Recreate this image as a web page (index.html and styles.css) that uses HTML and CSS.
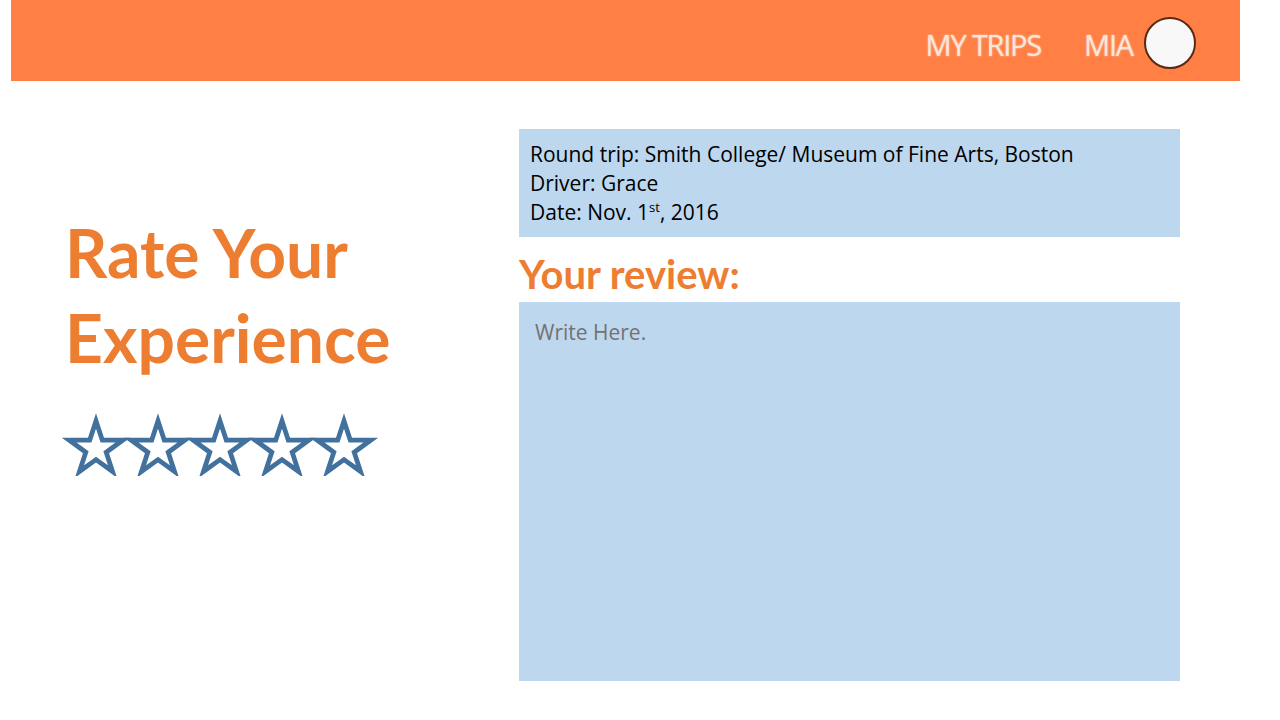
FILE: index.html
```html
<!DOCTYPE html>
<html>
<head>
<meta charset="utf-8">
<link rel="stylesheet" href="styles.css">
</head>
<body>
<header class="topbar">
  <nav class="nav">
    <span class="nav-link">MY TRIPS</span>
    <span class="nav-user">MIA</span>
    <span class="avatar"></span>
  </nav>
</header>
<main class="content">
  <section class="left">
    <h1 class="title">Rate Your<br>Experience</h1>
    <svg class="stars" width="330" height="64" viewBox="0 0 330 64">
      <g fill="#fff" stroke="#41719C" stroke-width="4.8" stroke-linejoin="miter">
        <polygon transform="translate(36 9)" points="0,0 6.3,19.2 26.8,19.2 10.2,31.2 16.5,50.5 0,38.6 -16.5,50.5 -10.2,31.2 -26.8,19.2 -6.3,19.2"/>
        <polygon transform="translate(98 9)" points="0,0 6.3,19.2 26.8,19.2 10.2,31.2 16.5,50.5 0,38.6 -16.5,50.5 -10.2,31.2 -26.8,19.2 -6.3,19.2"/>
        <polygon transform="translate(160 9)" points="0,0 6.3,19.2 26.8,19.2 10.2,31.2 16.5,50.5 0,38.6 -16.5,50.5 -10.2,31.2 -26.8,19.2 -6.3,19.2"/>
        <polygon transform="translate(222 9)" points="0,0 6.3,19.2 26.8,19.2 10.2,31.2 16.5,50.5 0,38.6 -16.5,50.5 -10.2,31.2 -26.8,19.2 -6.3,19.2"/>
        <polygon transform="translate(284 9)" points="0,0 6.3,19.2 26.8,19.2 10.2,31.2 16.5,50.5 0,38.6 -16.5,50.5 -10.2,31.2 -26.8,19.2 -6.3,19.2"/>
      </g>
    </svg>
  </section>
  <section class="right">
    <div class="trip-info">
      <div>Round trip: Smith College/ Museum of Fine Arts, Boston</div>
      <div>Driver: Grace</div>
      <div>Date: Nov. 1<sup>st</sup>, 2016</div>
    </div>
    <h2 class="review-label">Your review:</h2>
    <div class="review-box">Write Here.</div>
  </section>
</main>
</body>
</html>
```
FILE: styles.css
```css
html, body {
  margin: 0;
  padding: 0;
  background: #ffffff;
}
body {
  width: 1280px;
  height: 720px;
  overflow: hidden;
  font-family: "Lato", "Open Sans", sans-serif;
}
.topbar {
  margin-left: 11px;
  width: 1229px;
  height: 81px;
  background: #FF7F45;
}
.nav {
  display: flex;
  justify-content: flex-end;
  align-items: center;
  height: 100%;
  padding-right: 44px;
  padding-top: 6px;
  box-sizing: border-box;
}
.nav-link, .nav-user {
  font-family: "Open Sans", sans-serif;
  font-size: 29px;
  letter-spacing: -1.2px;
  color: #FCE6D8;
  text-shadow: 0 0 2px rgba(255,255,255,0.7);
  line-height: 1;
  margin-top: 2px;
}
.nav-link {
  margin-right: 43px;
}
.nav-user {
  margin-right: 11px;
}
.avatar {
  width: 48px;
  height: 48px;
  border-radius: 50%;
  background: #F8F8F8;
  border: 2px solid #5A2A14;
  margin-top: -1px;
}
.content {
  display: flex;
  padding-left: 65px;
}
.left {
  width: 454px;
}
.title {
  margin: 129px 0 0 0;
  font-family: "Lato", sans-serif;
  font-weight: 700;
  font-size: 66px;
  line-height: 85px;
  color: #ED7D31;
}
.stars {
  display: block;
  margin: 32px 0 0 -5px;
}
.right {
  width: 661px;
  margin-top: 48px;
}
.trip-info {
  background: #BDD7EE;
  padding: 11px 11px 0 11px;
  font-family: "Open Sans", sans-serif;
  font-size: 21px;
  letter-spacing: 0;
  line-height: 29px;
  color: #000;
  height: 108px;
  box-sizing: border-box;
}
.trip-info sup {
  font-size: 13px;
  line-height: 0;
  vertical-align: 8px;
}
.review-label {
  margin: 10px 0 0 0;
  font-family: "Lato", sans-serif;
  font-weight: 700;
  font-size: 40px;
  line-height: 55px;
  color: #ED7D31;
}
.review-box {
  background: #BDD7EE;
  height: 379px;
  box-sizing: border-box;
  padding: 15px 16px;
  font-family: "Open Sans", sans-serif;
  font-size: 21px;
  line-height: 30px;
  color: #767171;
}
```
